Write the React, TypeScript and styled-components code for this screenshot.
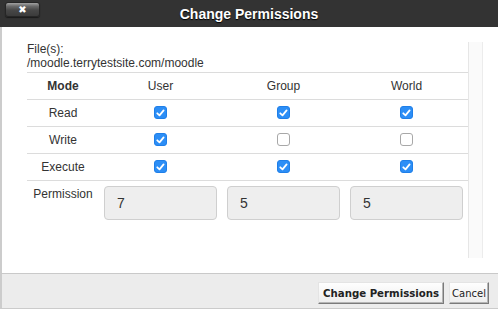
import React from "react";
import styled, { createGlobalStyle } from "styled-components";

const Global = createGlobalStyle`
  html, body { margin: 0; padding: 0; background: #fff; }
  body { font-family: "Liberation Sans", Arial, Helvetica, sans-serif; }
  * { box-sizing: border-box; }
`;

const Dialog = styled.div`
  width: 498px;
  height: 309px;
  display: flex;
  flex-direction: column;
  overflow: hidden;
  background: #fff;
`;

const TitleBar = styled.div`
  height: 27px;
  flex: none;
  background: #333;
  display: grid;
  grid-template-columns: 1fr auto 1fr;
  align-items: center;
`;

const CloseButton = styled.button`
  justify-self: start;
  align-self: start;
  margin: 2px 0 0 5px;
  width: 35px;
  height: 15px;
  padding: 0;
  border: 1px solid #262626;
  border-radius: 3px;
  background: linear-gradient(#a2a2a2 0%, #6a6a6a 25%, #474747 55%, #3b3b3b 100%);
  color: #fff;
  font: bold 10px "DejaVu Sans", Verdana, sans-serif;
  line-height: 13px;
  text-align: center;
  box-shadow: 0 1px 1px rgba(0, 0, 0, 0.5);
`;

const Title = styled.div`
  color: #fff;
  font-weight: bold;
  font-size: 14px;
  text-shadow: 0 1px 1px #000;
  white-space: nowrap;
`;

const Body = styled.div`
  flex: 1;
  min-height: 0;
  display: flex;
  border-left: 2px solid #ccc;
  background: #fff;
`;

const Content = styled.div`
  flex: 1;
  padding: 15px 0 0 25px;
  color: #333;
  font-size: 12px;
`;

const ScrollTrack = styled.div`
  flex: none;
  width: 15px;
  margin: 15px 15px 15px 0;
  background: #fafafa;
  border-left: 1px solid #e6e6e6;
  border-right: 1px solid #ececec;
`;

const FileLine = styled.div`
  line-height: 14px;
  white-space: nowrap;
`;

const Table = styled.div`
  margin-top: 2px;
  width: 441px;
  border-top: 1px solid #dcdcdc;
`;

const Row = styled.div<{ $tall?: boolean }>`
  display: grid;
  grid-template-columns: 72px repeat(3, 123px);
  height: ${(p) => (p.$tall ? "auto" : "27px")};
  border-bottom: ${(p) => (p.$tall ? "none" : "1px solid #dcdcdc")};
  align-items: ${(p) => (p.$tall ? "start" : "center")};
`;

const Cell = styled.div<{ $bold?: boolean }>`
  display: flex;
  justify-content: center;
  align-items: center;
  font-weight: ${(p) => (p.$bold ? "bold" : "normal")};
  line-height: 14px;
`;

const LabelCell = styled.div`
  text-align: center;
  line-height: 14px;
  padding-top: 6px;
`;

const InputCell = styled.div`
  padding: 5px 5px 0 5px;
`;

const Box = styled.span<{ $on: boolean }>`
  width: 13px;
  height: 13px;
  border-radius: 3px;
  display: inline-flex;
  align-items: center;
  justify-content: center;
  background: ${(p) => (p.$on ? "#2c8ef6" : "#fff")};
  border: 1px solid ${(p) => (p.$on ? "#1f7fe8" : "#a8a8a8")};
  margin-top: -1px;
`;

const PermInput = styled.div`
  height: 34px;
  width: 113px;
  background: #eee;
  border: 1px solid #cfcfcf;
  border-radius: 4px;
  padding-left: 12px;
  display: flex;
  align-items: center;
  font-size: 14px;
  color: #333;
`;

const Footer = styled.div`
  flex: none;
  height: 36px;
  background: #ececec;
  border-top: 1px solid #c9c9c9;
  border-bottom: 1px solid #cbcbcb;
  border-left: 2px solid #ccc;
  display: flex;
  justify-content: flex-end;
  align-items: flex-start;
  gap: 5px;
  padding: 8px 9px 0 0;
`;

const Button = styled.button<{ $primary?: boolean }>`
  height: 22px;
  padding: ${(p) => (p.$primary ? "0 4px" : "0 2px")};
  font-family: "DejaVu Sans", Verdana, sans-serif;
  font-size: ${(p) => (p.$primary ? "10.2px" : "10px")};
  font-weight: ${(p) => (p.$primary ? "bold" : "normal")};
  color: #222;
  background: linear-gradient(#fefefe, #ededed);
  border: 1px solid;
  border-color: #e4e4e4 #7a7a7a #7a7a7a #e4e4e4;
  border-radius: 0;
  box-shadow: inset -1px -1px 0 #b5b5b5;
`;

const Check = () => (
  <svg width="9" height="8" viewBox="0 0 9 8">
    <path d="M1.3 4.3 L3.5 6.3 L7.6 1.4" fill="none" stroke="#fff" strokeWidth="1.8" strokeLinecap="round" strokeLinejoin="round" />
  </svg>
);

const CheckBox = ({ on }: { on: boolean }) => <Box $on={on}>{on && <Check />}</Box>;

const rows: { label: string; values: boolean[] }[] = [
  { label: "Read", values: [true, true, true] },
  { label: "Write", values: [true, false, false] },
  { label: "Execute", values: [true, true, true] },
];

export default function App() {
  return (
    <>
      <Global />
      <Dialog>
        <TitleBar>
          <CloseButton>✖</CloseButton>
          <Title>Change Permissions</Title>
          <div />
        </TitleBar>
        <Body>
          <Content>
            <FileLine>File(s):</FileLine>
            <FileLine>/moodle.terrytestsite.com/moodle</FileLine>
            <Table>
              <Row>
                <Cell $bold>Mode</Cell>
                <Cell>User</Cell>
                <Cell>Group</Cell>
                <Cell>World</Cell>
              </Row>
              {rows.map((r) => (
                <Row key={r.label}>
                  <Cell>{r.label}</Cell>
                  {r.values.map((v, i) => (
                    <Cell key={i}>
                      <CheckBox on={v} />
                    </Cell>
                  ))}
                </Row>
              ))}
              <Row $tall>
                <LabelCell>Permission</LabelCell>
                {["7", "5", "5"].map((v, i) => (
                  <InputCell key={i}>
                    <PermInput>{v}</PermInput>
                  </InputCell>
                ))}
              </Row>
            </Table>
          </Content>
          <ScrollTrack />
        </Body>
        <Footer>
          <Button $primary>Change Permissions</Button>
          <Button>Cancel</Button>
        </Footer>
      </Dialog>
    </>
  );
}
